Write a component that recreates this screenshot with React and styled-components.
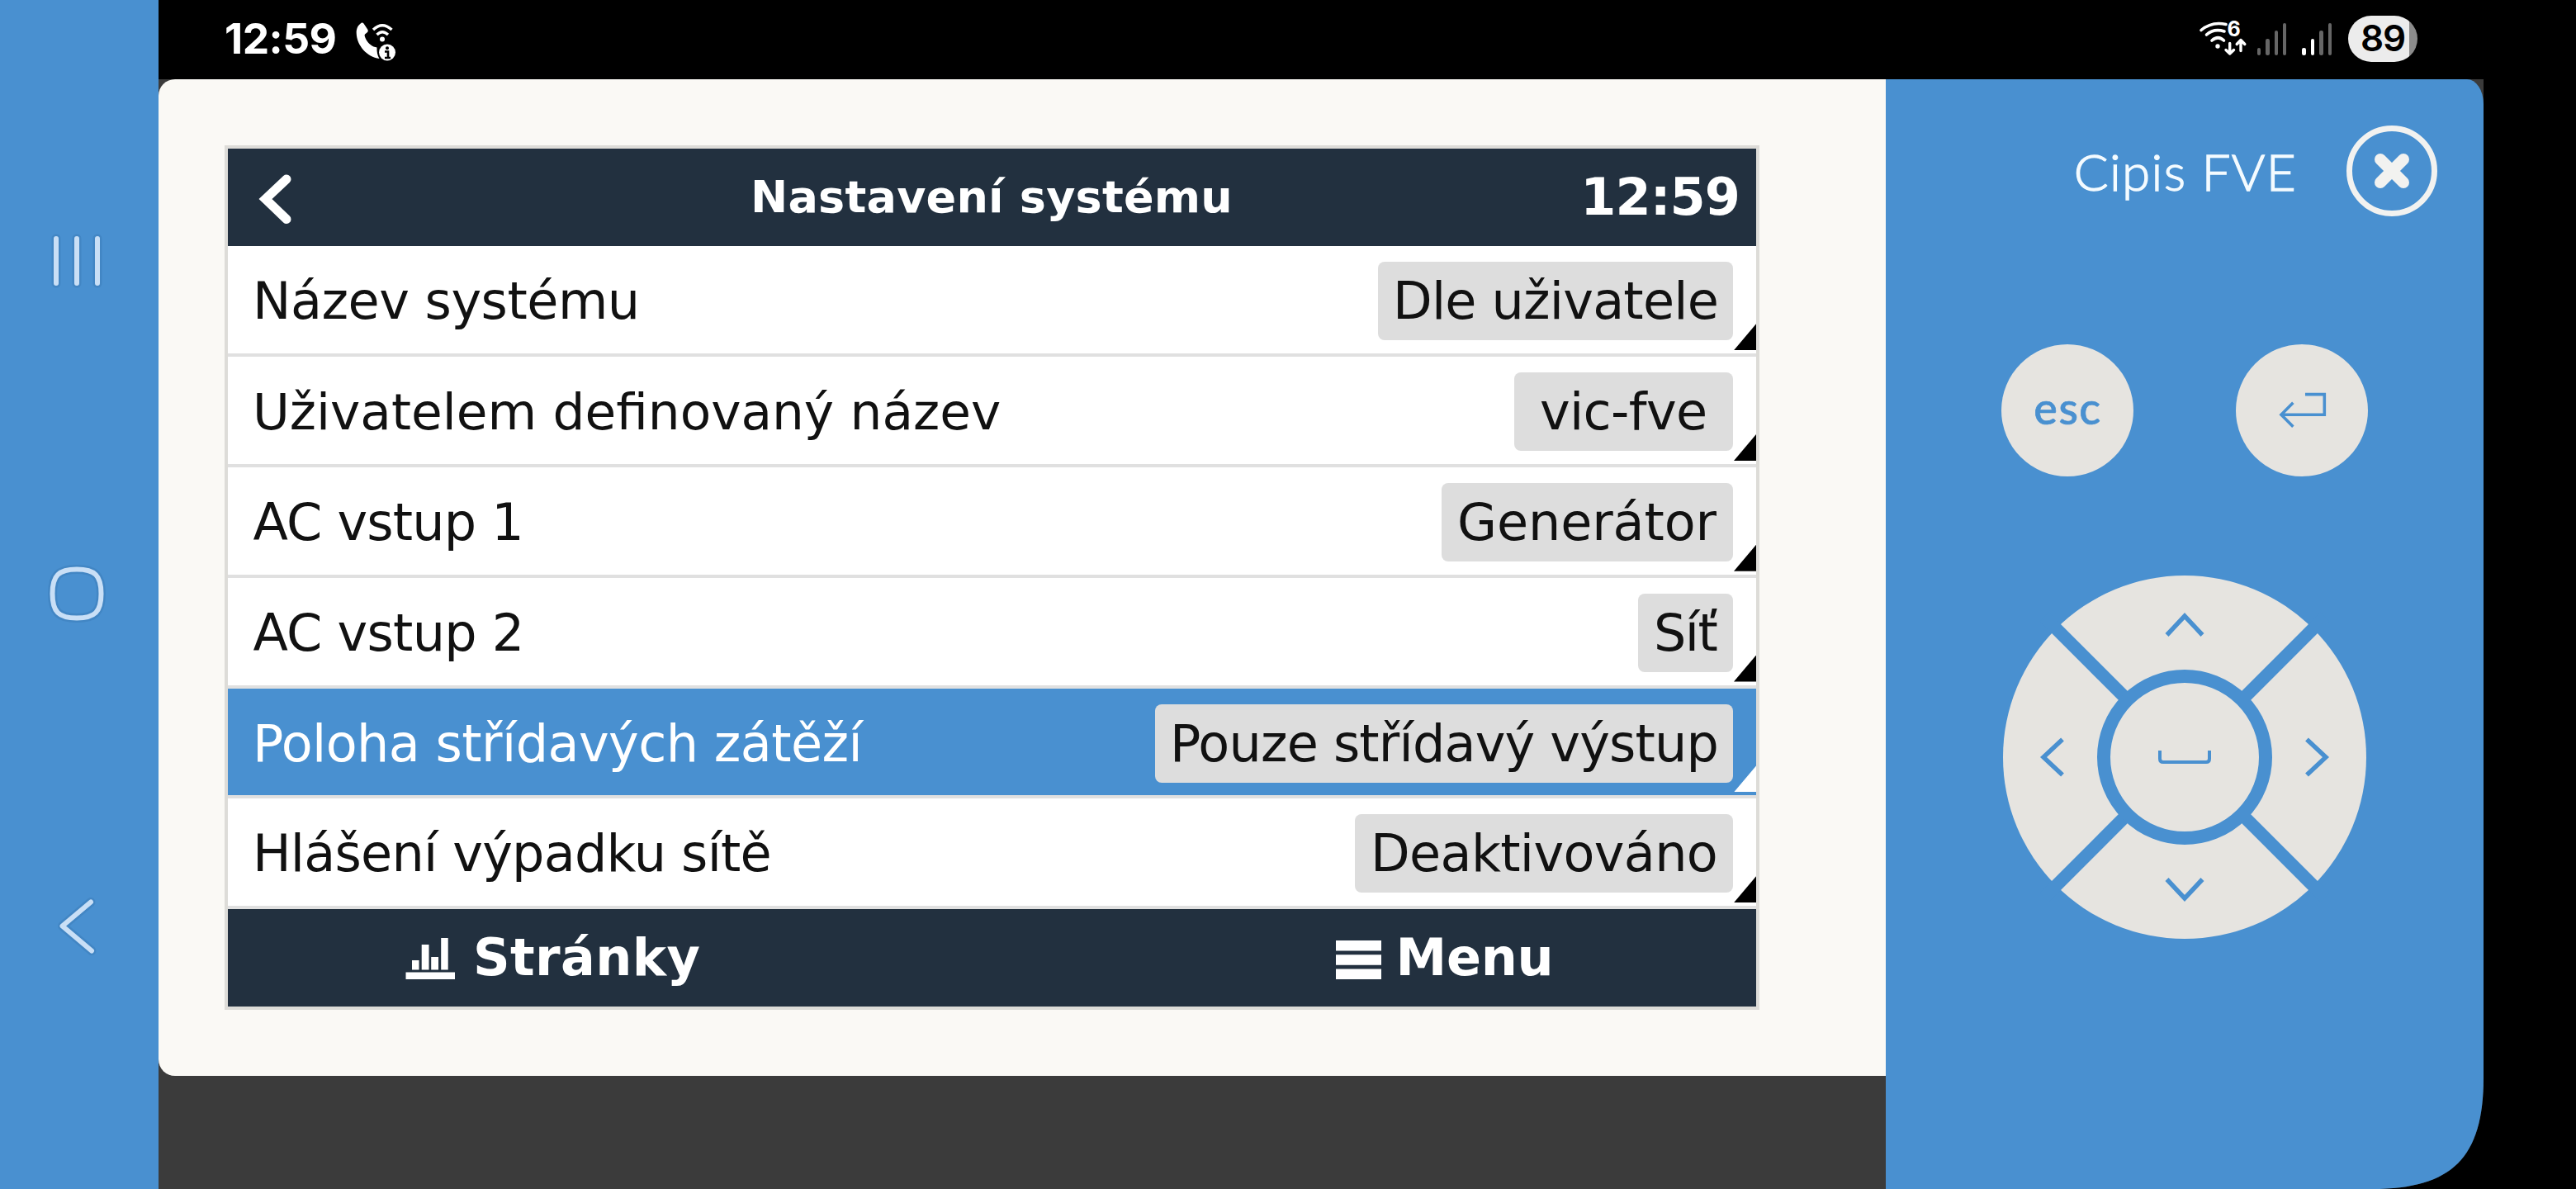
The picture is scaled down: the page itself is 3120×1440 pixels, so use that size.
import React from "react";
import styled, { createGlobalStyle, css } from "styled-components";

const blue = "#4990d0";
const navy = "#22303f";
const dark = "#3b3b3b";
const key = "#e6e4e0";
const navTint = "#c9dff6";

const GlobalStyle = createGlobalStyle`
  * { box-sizing: border-box; }
  body { margin: 0; background: #000; }
`;

const Device = styled.div`
  display: flex;
  width: 3120px;
  height: 1440px;
  background: #000;
  overflow: hidden;
`;

const NavBar = styled.nav`
  display: flex;
  flex-direction: column;
  justify-content: space-between;
  align-items: center;
  width: 192px;
  padding: 276px 6px 278px 0;
  background: ${blue};
`;

const NavIcon = styled.svg`
  display: block;
  width: 80px;
  height: 80px;
  fill: none;
  stroke-linecap: round;
  stroke-linejoin: round;
`;

const Main = styled.div`
  display: flex;
  flex-direction: column;
  flex: 1;
`;

const StatusBar = styled.header`
  display: flex;
  justify-content: space-between;
  height: 96px;
  padding: 0 192px 3px 80px;
  color: #fff;
`;

const StatusGroup = styled.div`
  display: flex;
  align-items: center;
`;

const StatusTime = styled.span`
  width: 153px;
  font: 700 51.5px/93px Inter, sans-serif;
  letter-spacing: -0.57px;
`;

const StatusIcon = styled.svg`
  display: block;
  width: ${(p) => p.$w}px;
  height: 60px;
  margin-right: ${(p) => p.$gap || 0}px;
`;

const Signal = styled.div`
  display: flex;
  align-items: flex-end;
  gap: 6px;
  height: 40px;
  margin-right: ${(p) => p.$gap}px;
`;

const SignalBar = styled.i`
  width: 4.4px;
  height: ${(p) => p.$h}px;
  border-radius: 2.2px;
  background: ${(p) => (p.$on ? "#fff" : "#666")};
`;

const Battery = styled.span`
  width: 84px;
  height: 56px;
  border-radius: 28px;
  background: linear-gradient(90deg, #ececec 74px, #8b8b8b 74px);
  color: #000;
  font: 600 44px/55px Inter, sans-serif;
  letter-spacing: -1.2px;
  padding-left: 15px;
`;

const AppWindow = styled.main`
  display: flex;
  width: 2816px;
  height: 1344px;
  background: ${dark};
  clip-path: path("M0 0H2816V1209C2816 1306 2778 1344 2681 1344H0Z");
`;

const Stage = styled.section`
  width: 2092px;
  height: 1207px;
  padding: 80px;
  border-radius: 20px 0 0 20px;
  background: #faf9f5;
`;

const Screen = styled.div`
  display: flex;
  flex-direction: column;
  width: 1859px;
  height: 1047px;
  border: 4px solid #dddcd8;
  background: #fff;
  overflow: hidden;
  font-family: "DejaVu Sans", sans-serif;
  white-space: nowrap;
  color: #111;
`;

const ScreenHeader = styled.div`
  display: grid;
  grid-template-columns: 1fr auto 1fr;
  height: 118.4px;
  padding: 0 20px 0 30px;
  background: ${navy};
  color: #fff;
  font-weight: bold;
`;

const BackIcon = styled.svg`
  width: 50px;
  height: 70px;
  margin-top: 26px;
`;

const Title = styled.h1`
  margin: 0 0 0 -11px;
  font-size: 54px;
  line-height: 117px;
  letter-spacing: 0.22px;
`;

const Clock = styled.span`
  justify-self: end;
  font-size: 62px;
  line-height: 118px;
  letter-spacing: -0.93px;
`;

const Row = styled.div`
  position: relative;
  display: flex;
  justify-content: space-between;
  flex: none;
  height: 133.8px;
  padding: 19px 28px 0 30px;
  border-bottom: 4px solid #e0e0e0;
  ${(p) =>
    p.$selected &&
    css`
      background: ${blue};
      background-clip: padding-box;
      color: #fff;
    `}
`;

const Label = styled.span`
  padding-left: ${(p) => p.$inset || 0}px;
  font-size: ${(p) => p.$size || 62}px;
  line-height: 96px;
  letter-spacing: ${(p) => p.$ls}px;
`;

const Value = styled.span`
  width: ${(p) => p.$w}px;
  height: 95px;
  border-radius: 8px;
  background: #ddd;
  color: #111;
  font-size: 62px;
  line-height: 96px;
  text-indent: ${(p) => p.$inset}px;
  letter-spacing: ${(p) => p.$ls}px;
`;

const Corner = styled.i`
  position: absolute;
  right: 0;
  bottom: 4px;
  width: 27px;
  height: 32px;
  background: ${(p) => (p.$light ? "#fff" : "#000")};
  clip-path: polygon(100% 0, 100% 100%, 0 100%);
`;

const ScreenFooter = styled.div`
  display: grid;
  grid-template-columns: 1fr 1fr;
  flex: 1;
  background: ${navy};
`;

const FooterButton = styled.div`
  display: flex;
  align-items: flex-start;
  padding-left: ${(p) => p.$inset}px;
  gap: ${(p) => p.$gap}px;
  color: #fff;
  font: bold 62px/117px "DejaVu Sans", sans-serif;
  letter-spacing: ${(p) => p.$ls}px;
`;

const FooterIcon = styled.svg`
  width: 60px;
  height: 60px;
  margin-top: 30px;
  fill: #fff;
`;

const Panel = styled.aside`
  display: flex;
  flex-direction: column;
  align-items: center;
  width: 724px;
  height: 1344px;
  border-top-right-radius: 20px 30px;
  background: ${blue};
`;

const PanelHead = styled.div`
  display: flex;
  align-self: stretch;
  justify-content: flex-end;
  padding: 56px 56px 0 0;
`;

const DeviceName = styled.span`
  margin-right: 60px;
  color: #f4fbff;
  font: 300 62px/111px Lato, sans-serif;
  letter-spacing: 1.3px;
  -webkit-text-stroke: 1.3px #f4fbff;
`;

const CloseButton = styled.button`
  display: flex;
  align-items: center;
  justify-content: center;
  width: 110px;
  height: 110px;
  padding: 0;
  border: 7px solid #f2f2f0;
  border-radius: 50%;
  background: none;
`;

const KeyRow = styled.div`
  display: flex;
  gap: 124px;
  margin: 154px 0 120px;
`;

const RoundKey = styled.button`
  display: flex;
  align-items: center;
  justify-content: center;
  width: 160px;
  height: 160px;
  padding: 0 0 6px 1px;
  border: 0;
  border-radius: 50%;
  background: ${key};
  color: ${blue};
  font: 500 54px/60px Lato, sans-serif;
  letter-spacing: 1.5px;
  -webkit-text-stroke: 0.7px ${blue};
`;

const Pad = styled.svg`
  display: block;
  width: 440px;
  height: 440px;
`;

function Outlined({ d }) {
  return (
    <>
      <path d={d} stroke="#4286c4" strokeWidth="11" />
      <path d={d} stroke={navTint} strokeWidth="6" />
    </>
  );
}

const rows = [
  { label: "Název systému", ls: -0.48, value: "Dle uživatele", w: 430, inset: 18, vls: -0.8 },
  { label: "Uživatelem definovaný název", size: 61.3, ls: 0, value: "vic-fve", w: 265, inset: 31, vls: -0.65 },
  { label: "AC vstup 1", lead: 0.5, ls: -0.8, value: "Generátor", w: 353, inset: 19, vls: -0.1 },
  { label: "AC vstup 2", lead: 0.5, ls: -0.75, value: "Síť", w: 115, inset: 19, vls: -1.6 },
  { label: "Poloha střídavých zátěží", ls: -0.54, value: "Pouze střídavý výstup", w: 700, inset: 18, vls: -0.82, selected: true },
  { label: "Hlášení výpadku sítě", ls: -0.78, value: "Deaktivováno", w: 458, inset: 19, vls: -0.65 },
];

const heights = [9, 20, 30, 39];

function Bars({ on, gap }) {
  return (
    <Signal $gap={gap}>
      {heights.map((h, i) => (
        <SignalBar key={h} $h={h} $on={i < on} />
      ))}
    </Signal>
  );
}

export default function App() {
  return (
    <Device>
      <GlobalStyle />
      <NavBar>
        <NavIcon viewBox="0 0 80 80">
          <Outlined d="M15 13V67M40 13V67M65 13V67" />
        </NavIcon>
        <NavIcon viewBox="0 0 80 80">
          <Outlined d="M40 10.5C62 10.5 69.500 18 69.500 40S62 69.500 40 69.500 10.500 62 10.500 40 18 10.500 40 10.500Z" />
        </NavIcon>
        <NavIcon viewBox="0 0 80 80">
          <Outlined d="M57 10.500L22.500 39.500L58 69.500" />
        </NavIcon>
      </NavBar>
      <Main>
        <StatusBar>
          <StatusGroup>
            <StatusTime>12:59</StatusTime>
            <StatusIcon $w={60} viewBox="0 -2 60 60" fill="#fff">
              <path d="M13 8.500Q14.500 8 15.500 9.500L20.500 17Q21.500 19 19.500 20.500L17 22.500Q16.300 23.300 16.800 25C18.500 30.500 22.500 35 27.500 37.500L31.500 38.500C31.300 43.500 32 48 34.500 52C19.500 50 7 36 6.700 21C6.600 15.500 8.500 11.500 13 8.500Z" />
              <circle cx="38" cy="28.500" r="3" />
              <path d="M27 17Q38 6.500 49.500 17M31.500 23Q38 16.500 45 23" fill="none" stroke="#fff" strokeWidth="3.400" />
              <circle cx="44" cy="44.500" r="10" />
              <circle cx="44" cy="39.200" r="2" fill="#000" />
              <path d="M41 43.500H45V51M41 51H48" fill="none" stroke="#000" strokeWidth="2.600" />
            </StatusIcon>
          </StatusGroup>
          <StatusGroup>
            <StatusIcon $w={62} $gap={11} viewBox="0 -1 62 60">
              <g fill="none" stroke="#fff" strokeLinecap="round">
                <path d="M5 18.500Q18 7.500 35 11.500" strokeWidth="3.600" />
                <path d="M11.500 24Q20.500 16 33 20" strokeWidth="3.600" />
                <path d="M18 31Q25.500 24.500 32.500 31" strokeWidth="3.600" />
                <path d="M39.700 34.500V47M35 42.500L39.700 47L44.500 42.500M53 43.500V30.500M48.200 35.500L53 30.500L57.800 35.500" strokeWidth="3.400" strokeLinejoin="round" />
              </g>
              <circle cx="25" cy="38" r="2.700" fill="#fff" />
              <text x="36.500" y="25.500" fill="#fff" fontFamily="Inter, sans-serif" fontWeight="700" fontSize="25">6</text>
            </StatusIcon>
            <Bars on={0} gap={19} />
            <Bars on={2} gap={20} />
            <Battery>89</Battery>
          </StatusGroup>
        </StatusBar>
        <AppWindow>
          <Stage>
            <Screen>
              <ScreenHeader>
                <BackIcon viewBox="0 0 50 70" fill="none" stroke="#fff" strokeWidth="11">
                  <path d="M41 11L15.500 35L41 59.500" strokeLinecap="round" />
                </BackIcon>
                <Title>Nastavení systému</Title>
                <Clock>12:59</Clock>
              </ScreenHeader>
              {rows.map((r) => (
                <Row key={r.label} $selected={r.selected}>
                  <Label $ls={r.ls} $size={r.size} $inset={r.lead}>{r.label}</Label>
                  <Value $w={r.w} $inset={r.inset} $ls={r.vls}>{r.value}</Value>
                  <Corner $light={r.selected} />
                </Row>
              ))}
              <ScreenFooter>
                <FooterButton $inset={215} $gap={22} $ls={0.4}>
                  <FooterIcon viewBox="0 0 60 60">
                    <path d="M0.500 46.500H60V55H0.500ZM8 32H16.500V43.500H8ZM19.700 13H28.500V43.500H19.700ZM31.200 28H40V43.500H31.200ZM43.200 5H51.700V43.500H43.200Z" />
                  </FooterIcon>
                  Stránky
                </FooterButton>
                <FooterButton $inset={415} $gap={14} $ls={-0.3}>
                  <FooterIcon viewBox="0 0 60 60">
                    <path d="M1 8H56V20.500H1ZM1 25.300H56V37.700H1ZM1 42.500H56V55H1Z" />
                  </FooterIcon>
                  Menu
                </FooterButton>
              </ScreenFooter>
            </Screen>
          </Stage>
          <Panel>
            <PanelHead>
              <DeviceName>Cipis FVE</DeviceName>
              <CloseButton aria-label="Zavřít">
                <svg width="50" height="50" viewBox="-25 -25 50 50" stroke="#f2f2f0" strokeWidth="14" strokeLinecap="round">
                  <path d="M-14 -14L14 14M14 -14L-14 14" />
                </svg>
              </CloseButton>
            </PanelHead>
            <KeyRow>
              <RoundKey>esc</RoundKey>
              <RoundKey aria-label="Enter">
                <svg width="160" height="155" viewBox="0 0 160 155" fill="none" stroke={blue} strokeWidth="3.600">
                  <path d="M83.500 60.500H107V85.300H54.500M68.800 70.800L54.300 85.300L68.800 99.800" />
                </svg>
              </RoundKey>
            </KeyRow>
            <Pad viewBox="-220 -220 440 440" fill="none" stroke={blue} strokeWidth="5.500">
              <circle r="220" fill={key} stroke="none" />
              <path d="M-170 -170L170 170M170 -170L-170 170" strokeWidth="15.500" />
              <circle r="98" fill={key} strokeWidth="16" />
              <path d="M-21.500 -148L0 -171L21.500 -148M-21.500 148L0 171L21.500 148M-148 -21.500L-171 0L-148 21.500M148 -21.500L171 0L148 21.500" />
              <path d="M-30 -8V2Q-30 6 -26 6H26Q30 6 30 2V-8" strokeWidth="4" />
            </Pad>
          </Panel>
        </AppWindow>
      </Main>
    </Device>
  );
}
